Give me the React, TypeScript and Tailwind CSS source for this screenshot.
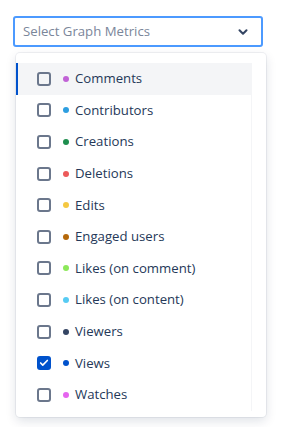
import { Check, ChevronDown } from "lucide-react";

type Metric = { label: string; color: string; checked?: boolean; active?: boolean };

const metrics: Metric[] = [
  { label: "Comments", color: "#c162d6", active: true },
  { label: "Contributors", color: "#2d9ee0" },
  { label: "Creations", color: "#1e8e4e" },
  { label: "Deletions", color: "#ec5a5a" },
  { label: "Edits", color: "#f5c842" },
  { label: "Engaged users", color: "#b5680a" },
  { label: "Likes (on comment)", color: "#8ce85a" },
  { label: "Likes (on content)", color: "#57cbf3" },
  { label: "Viewers", color: "#344563" },
  { label: "Views", color: "#0052cc", checked: true },
  { label: "Watches", color: "#e565ef" },
];

export default function App() {
  return (
    <div className="w-[283px] h-[427px] bg-white pt-[16px] pl-[13px] font-['Open_Sans',sans-serif]">
      <div className="flex items-center justify-between w-[250px] h-[31px] border-2 border-[#4c9aff] rounded-[3px] pl-[8px] pr-[11px]">
        <span className="text-[13.2px] text-[#7a869a] leading-none">Select Graph Metrics</span>
        <ChevronDown size={14} strokeWidth={3.5} className="text-[#344563]" />
      </div>
      <div className="ml-[3px] mt-[6px] w-[250px] bg-white rounded-[4px] shadow-[0_0_0_1px_rgba(9,30,66,0.06),0_4px_11px_rgba(9,30,66,0.13)] flex pt-[10px] pb-[6px]">
        <div className="w-[235px]">
          {metrics.map((m) => (
            <div
              key={m.label}
              className={`flex items-center h-[31.6px] pl-[21px] ${
                m.active ? "bg-[#f4f5f7] shadow-[inset_2px_0_0_#0052cc]" : ""
              }`}
            >
              {m.checked ? (
                <span className="flex items-center justify-center w-[14px] h-[14px] rounded-[3px] bg-[#0052cc]">
                  <Check size={10} strokeWidth={4} className="text-white" />
                </span>
              ) : (
                <span className="w-[14px] h-[14px] rounded-[3px] border-2 border-[#6b778c]" />
              )}
              <span
                className="ml-[12px] w-[6px] h-[6px] rounded-full"
                style={{ backgroundColor: m.color }}
              />
              <span className="ml-[6px] text-[13.2px] text-[#253858] leading-none">{m.label}</span>
            </div>
          ))}
        </div>
        <div className="flex-1 border-l border-[#f4f5f7]" />
      </div>
    </div>
  );
}
